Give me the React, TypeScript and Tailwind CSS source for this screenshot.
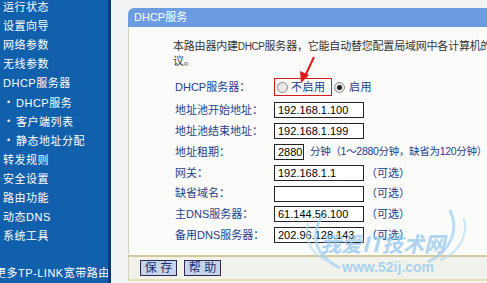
import React from "react";

const menu = [
  { label: "运行状态" },
  { label: "设置向导" },
  { label: "网络参数" },
  { label: "无线参数" },
  { label: "DHCP服务器" },
  { label: "DHCP服务", sub: true },
  { label: "客户端列表", sub: true },
  { label: "静态地址分配", sub: true },
  { label: "转发规则" },
  { label: "安全设置" },
  { label: "路由功能" },
  { label: "动态DNS" },
  { label: "系统工具" },
];

const font = "font-['Liberation_Sans','Noto_Sans_CJK_SC',sans-serif]";

const Radio = ({ checked }: { checked?: boolean }) => (
  <span className="w-[11px] h-[11px] rounded-full border border-[#8a8a8a] bg-[#e8e8e8] flex items-center justify-center shrink-0">
    {checked && <span className="w-[5px] h-[5px] rounded-full bg-[#222]" />}
  </span>
);

const Field = ({ value, w = "w-[90px]" }: { value: string; w?: string }) => (
  <div className={`${w} h-[16px] border border-[#222] bg-white text-[11px] leading-[14px] pl-[3px] text-black whitespace-nowrap overflow-hidden`}>{value}</div>
);

const Row = ({ label, children }: { label: string; children: React.ReactNode }) => (
  <div className="h-[20.8px] flex items-center">
    <div className="w-[99px] text-[#233f8c] shrink-0">{label}</div>
    <div className="flex items-center gap-[2px]">{children}</div>
  </div>
);

const Opt = () => <span className="text-[#1d3a86] whitespace-nowrap">（可选）</span>;

export default function App() {
  return (
    <div className={`w-[487px] h-[283px] flex overflow-hidden relative bg-[#f1f2f3] text-[11px] ${font}`}>
      {/* left menu */}
      <aside className="w-[108px] shrink-0 bg-[#1160ab] text-white flex flex-col -mt-[2px]">
        {menu.map((m) => (
          <div key={m.label} className={`h-[19.35px] flex items-center whitespace-nowrap ${m.sub ? "pl-[7px]" : "pl-[3px]"}`}>
            {m.sub && <span className="w-[9px] text-[9px]">•</span>}
            <span className="tracking-[0.5px]">{m.label}</span>
          </div>
        ))}
        <div className="h-[19px]" />
        <div className="h-[19px] flex items-center whitespace-nowrap -ml-[5px] tracking-[0.5px]">更多TP-LINK宽带路由</div>
      </aside>
      <div className="w-[3px] shrink-0 bg-[#0a3b78]" />

      {/* content */}
      <main className="flex-1 pl-[17px] pt-[8px]">
        <div className="w-[430px]">
          <div className="h-[19px] bg-[#6b9ce2] rounded-tl-[6px] text-white flex items-center pl-[6px]">DHCP服务</div>
          <div className="border-l border-[#d3d0bb] bg-[#fbfbfa] pl-[44px] pt-[12px] pb-[8px]">
            <div className="leading-[15px] text-[#333] whitespace-nowrap tracking-[-0.2px]">
              本路由器内建<span className="text-[10px] tracking-[-0.4px]">DHCP</span>服务器，它能自动替您配置局域网中各计算机的TCP/IP协
              <br />
              议。
            </div>
            <div className="pl-[2px] mt-[5px]">
              <div className="h-[26px] flex items-center">
                <div className="w-[99px] text-[#233f8c] shrink-0">DHCP服务器：</div>
                <div className="flex items-center">
                  <div className="w-[58px] h-[18px] border border-[#d21c1c] flex items-center pl-[2px] gap-[3px]">
                    <Radio />
                    <span className="text-[#1d3a86] tracking-[0.5px]">不启用</span>
                  </div>
                  <div className="flex items-center gap-[4px] ml-[2px]">
                    <Radio checked />
                    <span className="text-[#1d3a86] tracking-[0.5px]">启用</span>
                  </div>
                </div>
              </div>
              <Row label="地址池开始地址：">
                <Field value="192.168.1.100" />
              </Row>
              <Row label="地址池结束地址：">
                <Field value="192.168.1.199" />
              </Row>
              <Row label="地址租期：">
                <Field value="2880" w="w-[30px]" />
                <span className="ml-[4px] text-[#1d3a86] whitespace-nowrap text-[10.5px] tracking-[-0.3px]">分钟（1～2880分钟，缺省为120分钟）</span>
              </Row>
              <Row label="网关：">
                <Field value="192.168.1.1" />
                <Opt />
              </Row>
              <Row label="缺省域名：">
                <Field value="" />
                <Opt />
              </Row>
              <Row label="主DNS服务器：">
                <Field value="61.144.56.100" />
                <Opt />
              </Row>
              <Row label="备用DNS服务器：">
                <Field value="202.96.128.143" />
                <Opt />
              </Row>
            </div>
          </div>
          <div className="border-t border-white" />
          <div className="border-t-2 border-[#d6c79a] bg-[#f2f2ed] h-[24px] flex items-center gap-[7px] pl-[11px] border-l border-l-[#d3d0bb]">
            <button className="w-[37px] h-[16px] bg-[#c6d3ec] border border-[#2a2a4a] text-[#1a2e6e] text-[12px] leading-[14px] whitespace-nowrap">保 存</button>
            <button className="w-[37px] h-[16px] bg-[#c6d3ec] border border-[#2a2a4a] text-[#1a2e6e] text-[12px] leading-[14px] whitespace-nowrap">帮 助</button>
          </div>
          <div className="h-[2px] bg-[#e6deb0]" />
        </div>
      </main>

      {/* red arrow */}
      <svg className="absolute left-0 top-0 pointer-events-none" width="487" height="283">
        <line x1="314" y1="57" x2="306" y2="74" stroke="#e01818" strokeWidth="2" />
        <polygon points="301,83 300,71 309,75" fill="#e01818" />
      </svg>

      {/* watermark */}
      <div className="absolute left-[300px] top-[196px] w-[170px] h-[86px] pointer-events-none opacity-70">
        <svg className="absolute left-0 top-0" width="170" height="86">
          <path d="M22 20 C 10 40, 15 60, 40 72" stroke="#9fd0f2" strokeWidth="3" fill="none" />
          <path d="M8 28 C 4 45, 12 60, 30 66" stroke="#b6dcf5" strokeWidth="2" fill="none" />
          <path d="M150 14 C 160 35, 150 55, 128 66" stroke="#9fd0f2" strokeWidth="3" fill="none" />
          <path d="M164 22 C 168 40, 160 56, 140 64" stroke="#b6dcf5" strokeWidth="2" fill="none" />
        </svg>
        <div className="absolute left-[20px] top-[35px] text-[21px] font-bold text-[#8cc4ee] whitespace-nowrap font-['Noto_Sans_CJK_SC',sans-serif] leading-[24px] italic">我爱IT技术网</div>
        <div className="absolute left-[42px] top-[63px] text-[14px] font-bold text-[#8cc4ee] whitespace-nowrap leading-[16px]">www.52ij.com</div>
      </div>
    </div>
  );
}
